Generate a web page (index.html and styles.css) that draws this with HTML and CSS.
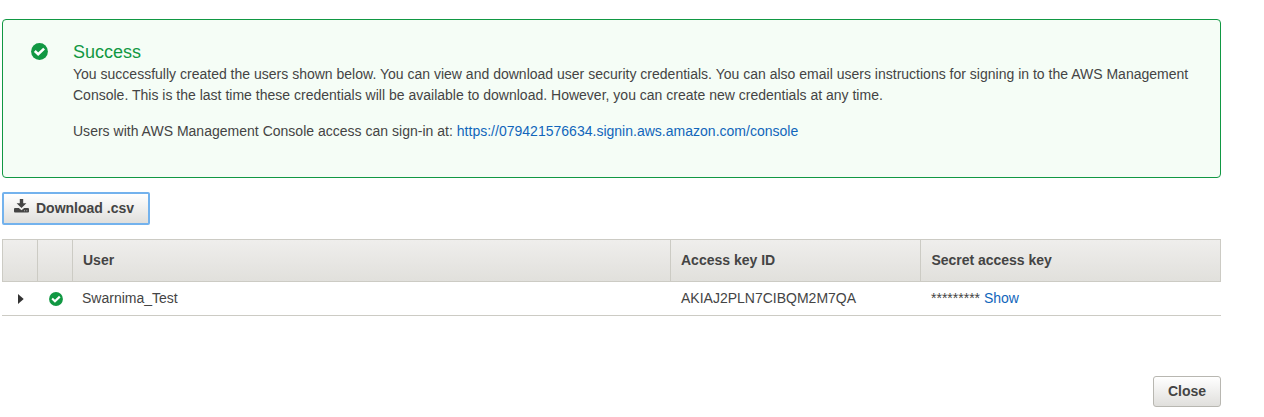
FILE: index.html
```html
<!DOCTYPE html>
<html lang="en">
<head>
<meta charset="utf-8">
<title>Add user</title>
<link rel="stylesheet" href="styles.css">
</head>
<body>
<main class="page">
  <section class="alert">
    <svg class="alert-icon" viewBox="0 0 17 17"><circle cx="8.5" cy="8.5" r="8.4" fill="#119843"/><path d="M3.8 8 7.2 11.2 13.1 5.6" fill="none" stroke="#fff" stroke-width="2.6"/></svg>
    <div class="alert-body">
      <h1 class="alert-title">Success</h1>
      <p class="alert-text">You successfully created the users shown below. You can view and download user security credentials. You can also email users instructions for signing in to the AWS Management<br>Console. This is the last time these credentials will be available to download. However, you can create new credentials at any time.</p>
      <p class="alert-text signin">Users with AWS Management Console access can sign-in at: <a class="link" href="#">https://079421576634.signin.aws.amazon.com/console</a></p>
    </div>
  </section>
  <button class="button download">
    <svg class="download-icon" viewBox="0 0 15 14"><path d="M5.8 0h3.4v4.2h3.2L7.5 9 2.6 4.2h3.2z" fill="#444"/><path d="M1 9h3.8l2.7 2.2L10.2 9H14a1 1 0 0 1 1 1v2.6a1 1 0 0 1-1 1H1a1 1 0 0 1-1-1V10a1 1 0 0 1 1-1z" fill="#444"/><path d="M10 11.3h1v1h-1zM12.3 11.3h1v1h-1z" fill="#aaa"/></svg>
    <span>Download .csv</span>
  </button>
  <div class="table">
    <div class="row head">
      <div class="cell"></div><div class="cell"></div><div class="cell">User</div><div class="cell">Access key ID</div><div class="cell secret">Secret access key</div>
    </div>
    <div class="row data">
      <div class="cell mark"><svg class="caret" viewBox="0 0 6 10"><path d="M0 0 5.7 5 0 10z" fill="#333"/></svg></div>
      <div class="cell mark"><svg class="check" viewBox="0 0 17 17"><circle cx="8.5" cy="8.5" r="8.4" fill="#119843"/><path d="M3.8 8 7.2 11.2 13.1 5.6" fill="none" stroke="#fff" stroke-width="2.6"/></svg></div>
      <div class="cell name">Swarnima_Test</div><div class="cell">AKIAJ2PLN7CIBQM2M7QA</div><div class="cell">********* <a class="link" href="#">Show</a></div>
    </div>
  </div>
  <footer class="footer"><button class="button close">Close</button></footer>
</main>
</body>
</html>
```
FILE: styles.css
```css
* { box-sizing: border-box; }
body { margin: 0; background: #fff; color: #444; font: 14px/21px "Liberation Sans", Arial, sans-serif; }
.page { display: flex; flex-direction: column; width: 1221px; padding: 19px 0 0 2px; }
.link { color: #1166bb; text-decoration: none; }
.alert { display: flex; height: 159px; padding: 21px 0 0 27.5px; border: 1px solid #119843; border-radius: 4px; background: #f5fdf6; }
.alert-icon { width: 17px; height: 17px; margin-top: 1.5px; }
.alert-body { margin-left: 25.5px; white-space: nowrap; }
.alert-title { margin: 0; font-size: 18px; line-height: 22px; padding-bottom: 1px; font-weight: 400; color: #119843; }
.alert-text { margin: 0 0 15px; letter-spacing: 0.006px; }
.signin { letter-spacing: 0.012px; }
.button { display: flex; align-items: center; justify-content: center; padding: 0 0 2px; border: 1px solid #b8b7b1; border-radius: 3px; background: linear-gradient(#fff, #e0dfdc); color: #444; font: bold 14px/20px "Liberation Sans", Arial, sans-serif; }
.download { width: 148px; height: 33px; margin-top: 14px; padding-right: 4px; gap: 7px; border: 2px solid #73b2ed; border-radius: 2px; }
.download-icon { width: 15px; height: 14px; margin-top: -3px; }
.table { margin-top: 14px; }
.row { display: grid; grid-template-columns: 35px 35px 598px 250px 1fr; }
.cell { padding-left: 11px; }
.head { height: 43px; border: 1px solid #cccbc4; background: linear-gradient(#efeeec, #e1e0dc); font-weight: 700; line-height: 41px; }
.head .cell { padding-left: 10px; border-right: 1px solid #cccbc4; }
.head .secret { padding-left: 10.5px; border-right: 0; letter-spacing: -0.03px; }
.head .cell:first-child, .head .cell:nth-child(2) { padding: 0; }
.data { height: 34px; border-bottom: 1px solid #cccbc4; line-height: 33px; }
.data .name { padding-left: 10px; }
.mark { display: flex; align-items: center; padding-left: 16px; }
.mark + .mark { padding-left: 12px; }
.caret { width: 6px; height: 10px; }
.check { width: 14px; height: 14px; }
.footer { display: flex; justify-content: flex-end; margin-top: 60px; }
.close { width: 68px; height: 31px; }
```
